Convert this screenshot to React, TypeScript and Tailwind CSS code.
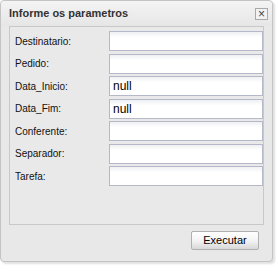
import { FC } from "react";

type Field = {
  label: string;
  value?: string;
};

const fields: Field[] = [
  { label: "Destinatario:" },
  { label: "Pedido:" },
  { label: "Data_Inicio:", value: "null" },
  { label: "Data_Fim:", value: "null" },
  { label: "Conferente:" },
  { label: "Separador:" },
  { label: "Tarefa:" },
];

const Row: FC<{ field: Field }> = ({ field }) => (
  <div className="flex items-center h-[20px]">
    <label className="w-[94px] text-[10px] text-[#111]">{field.label}</label>
    <input
      readOnly
      value={field.value ?? ""}
      className="w-[154px] h-[20px] border border-[#b5b8c8] bg-gradient-to-b from-[#eef0f2] via-white via-[30%] to-white px-[3px] text-[12px] text-black outline-none"
    />
  </div>
);

export default function App() {
  return (
    <div
      className="w-[278px] h-[271px] bg-white"
      style={{ fontFamily: '"Liberation Sans", Arial, sans-serif' }}
    >
      <div className="w-[273px] h-[262px] flex flex-col rounded-[4px] border border-[#c4c4c4] bg-[#e8e8e8] shadow-[2px_2px_2px_rgba(0,0,0,0.12)]">
        <div className="flex items-center justify-between h-[25px] pl-[8px] pr-[4px] rounded-t-[4px] bg-gradient-to-b from-[#f4f4f4] to-[#e6e6e6]">
          <span className="text-[11px] font-bold text-[#333]">Informe os parametros</span>
          <span className="flex items-center justify-center w-[13px] h-[12px] border border-[#a9a9a9] bg-[#f2f2f2] text-[12px] leading-none text-[#444]">
            ×
          </span>
        </div>
        <div className="flex flex-col flex-1 px-[3px] pb-[4px]">
          <div className="flex-1 mx-[5px] border border-[#c8c8c8] bg-[#e9e9e9] pt-[4px] pl-[5px] flex flex-col gap-[2.5px]">
            {fields.map((f, i) => (
              <Row key={i} field={f} />
            ))}
          </div>
          <div className="flex justify-end pt-[6px] pb-[7px] pr-[10px]">
            <button className="w-[68px] h-[19px] rounded-[2px] border border-[#b0b0b0] bg-gradient-to-b from-white via-[#f4f4f4] via-[50%] to-[#d8d8d8] text-[11px] text-black">
              Executar
            </button>
          </div>
        </div>
      </div>
    </div>
  );
}
